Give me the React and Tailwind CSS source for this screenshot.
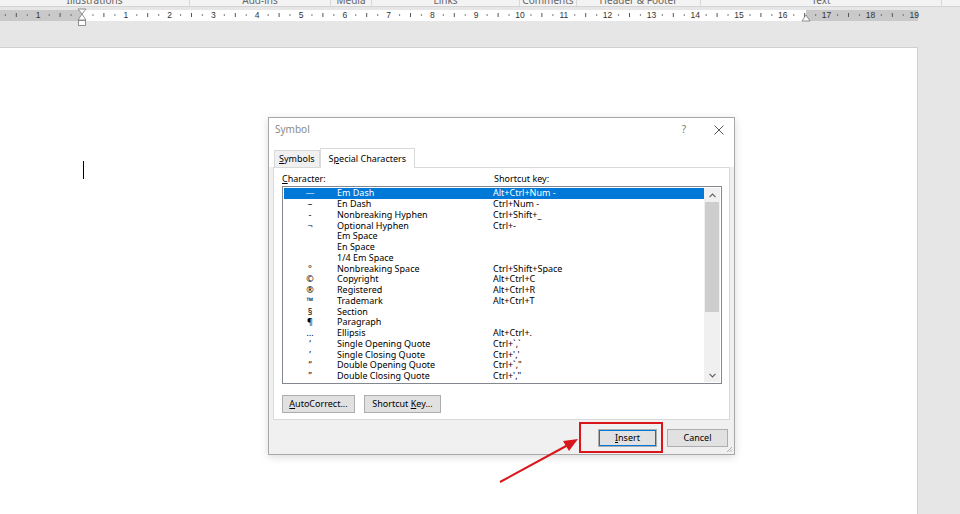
import React from 'react';

const rows = [
  { sym: '—', name: 'Em Dash', key: 'Alt+Ctrl+Num -' },
  { sym: '–', name: 'En Dash', key: 'Ctrl+Num -' },
  { sym: '-', name: 'Nonbreaking Hyphen', key: 'Ctrl+Shift+_' },
  { sym: '¬', name: 'Optional Hyphen', key: 'Ctrl+-' },
  { sym: '', name: 'Em Space', key: '' },
  { sym: '', name: 'En Space', key: '' },
  { sym: '', name: '1/4 Em Space', key: '' },
  { sym: '°', name: 'Nonbreaking Space', key: 'Ctrl+Shift+Space' },
  { sym: '©', name: 'Copyright', key: 'Alt+Ctrl+C' },
  { sym: '®', name: 'Registered', key: 'Alt+Ctrl+R' },
  { sym: '™', name: 'Trademark', key: 'Alt+Ctrl+T' },
  { sym: '§', name: 'Section', key: '' },
  { sym: '¶', name: 'Paragraph', key: '' },
  { sym: '…', name: 'Ellipsis', key: 'Alt+Ctrl+.' },
  { sym: '‘', name: 'Single Opening Quote', key: 'Ctrl+`,`' },
  { sym: '’', name: 'Single Closing Quote', key: "Ctrl+','" },
  { sym: '“', name: 'Double Opening Quote', key: 'Ctrl+`,"' },
  { sym: '”', name: 'Double Closing Quote', key: "Ctrl+',\"" },
];

const groups = [
  { label: 'Illustrations', w: 190 },
  { label: 'Add-ins', w: 141 },
  { label: 'Media', w: 41 },
  { label: 'Links', w: 148 },
  { label: 'Comments', w: 57 },
  { label: 'Header & Footer', w: 124 },
  { label: 'Text', w: 241 },
];

const Ruler = () => {
  const u = 43.8;
  const o = 82;
  const marks = [];
  for (let i = -2; i < 19; i++) {
    const p = o + i * u;
    marks.push(<circle key={`a${i}`} cx={p + u / 4} cy={7} r={0.7} fill="#555" />);
    marks.push(<line key={`b${i}`} x1={p + u / 2} y1={5} x2={p + u / 2} y2={9} stroke="#555" strokeWidth="1" />);
    marks.push(<circle key={`c${i}`} cx={p + (3 * u) / 4} cy={7} r={0.7} fill="#555" />);
    const n = i + 1;
    if (n !== 0) {
      marks.push(
        <text key={`t${i}`} x={p + u} y={10} fontSize="8.5" textAnchor="middle" fill="#333" fontFamily="Liberation Sans, sans-serif">
          {Math.abs(n)}
        </text>
      );
    }
  }
  return (
    <svg width="960" height="20" className="block">
      <rect x="0" y="2" width="82" height="11" fill="#c9c9c9" />
      <rect x="82" y="2" width="724" height="11" fill="#ffffff" />
      <rect x="806" y="2" width="112" height="11" fill="#c9c9c9" />
      {marks}
      <path d="M78 1 L86 1 L82 6 L86 12 L78 12 L82 6 Z" fill="#fff" stroke="#777" strokeWidth="0.8" />
      <rect x="78.5" y="12.5" width="7" height="5" fill="#fff" stroke="#777" strokeWidth="0.8" />
      <path d="M802 13 L810 13 L806 7 Z" fill="#fff" stroke="#777" strokeWidth="0.8" />
    </svg>
  );
};

const Btn = ({ children, className = '' }) => (
  <div className={`flex items-center justify-center h-[18px] bg-[#e1e1e1] border border-[#adadad] text-[9px] text-black ${className}`}>
    {children}
  </div>
);

export default function App() {
  return (
    <div className="relative w-[960px] h-[514px] overflow-hidden bg-[#e6e6e6]" style={{ fontFamily: '"Noto Sans", "Open Sans", sans-serif' }}>
      {/* Ribbon group labels (cut off) */}
      <div className="flex h-[7px] overflow-hidden bg-[#f3f3f3] border-b border-[#d4d4d4]">
        {groups.map((g) => (
          <div key={g.label} className="flex justify-center border-r border-[#d8d8d8] text-[10px] text-[#666] leading-none -mt-[5px]" style={{ width: g.w }}>
            {g.label}
          </div>
        ))}
      </div>

      {/* Ruler */}
      <div className="mt-[1px]">
        <Ruler />
      </div>

      {/* Document */}
      <div className="flex mt-[19px]">
        <div className="w-[918px] h-[470px] bg-white border-t border-r border-[#d0d0d0] relative">
          <div className="ml-[83px] mt-[113px] w-px h-[18px] bg-black" />
        </div>
      </div>

      {/* Symbol dialog */}
      <div className="absolute left-[268px] top-[117px] w-[467px] h-[338px] bg-[#f0f0f0] border border-[#a8a8a8] shadow-[0_2px_8px_rgba(0,0,0,0.15)] flex flex-col">
        <div className="h-[23px] bg-white flex items-center pl-[6px] pr-[10px]">
          <span className="text-[10px] text-[#8a8a8a]">Symbol</span>
          <span className="ml-auto text-[10px] text-[#777] mr-[28px]">?</span>
          <svg width="10" height="10" viewBox="0 0 10 10">
            <path d="M0.5 0.5 L9.5 9.5 M9.5 0.5 L0.5 9.5" stroke="#444" strokeWidth="0.9" />
          </svg>
        </div>

        <div className="flex items-end pl-[5px] h-[26px] bg-white">
          <div className="h-[17px] px-[4px] flex items-center border border-b-0 border-[#d9d9d9] bg-[#f0f0f0] text-[9px]">
            <span><span className="underline">S</span>ymbols</span>
          </div>
          <div className="h-[20px] px-[8px] flex items-center border border-b-0 border-[#d9d9d9] bg-white text-[9px] -mb-px z-10">
            <span>S<span className="underline">p</span>ecial Characters</span>
          </div>
        </div>

        <div className="mx-[4px] h-[253px] bg-white border border-[#d9d9d9] px-[8px] pt-[5px]">
          <div className="flex text-[9px] leading-[12px] h-[13px]">
            <span className="w-[212px]"><span className="underline">C</span>haracter:</span>
            <span>Shortcut key:</span>
          </div>
          <div className="flex w-[440px] h-[198px] border border-[#828790] p-px">
            <div className="flex-1 flex flex-col">
              {rows.map((r, i) => (
                <div key={r.name} className={`flex h-[10.75px] items-center text-[9px] leading-[10px] ${i === 0 ? 'bg-[#0078d7] text-white' : 'text-black'}`}>
                  <span className="w-[52px] text-center">{r.sym}</span>
                  <span className="w-[157px] pl-[1px]">{r.name}</span>
                  <span>{r.key}</span>
                </div>
              ))}
            </div>
            <div className="w-[16px] bg-[#f0f0f0] flex flex-col">
              <div className="h-[14px] flex items-center justify-center">
                <svg width="7" height="5" viewBox="0 0 7 5"><path d="M0.5 4.2 L3.5 1 L6.5 4.2" fill="none" stroke="#606060" strokeWidth="1.1" /></svg>
              </div>
              <div className="mx-[1px] h-[110px] bg-[#cdcdcd]" />
              <div className="flex-1" />
              <div className="h-[14px] flex items-center justify-center">
                <svg width="7" height="5" viewBox="0 0 7 5"><path d="M0.5 0.8 L3.5 4 L6.5 0.8" fill="none" stroke="#606060" strokeWidth="1.1" /></svg>
              </div>
            </div>
          </div>
          <div className="flex gap-[9px] mt-[11px]">
            <Btn className="w-[73px]"><span><span className="underline">A</span>utoCorrect...</span></Btn>
            <Btn className="w-[77px]"><span>Shortcut <span className="underline">K</span>ey...</span></Btn>
          </div>
        </div>

        <div className="flex justify-end gap-[10px] pr-[6px] mt-[9px]">
          <Btn className="w-[59px] border-[#0078d7] shadow-[inset_0_0_0_1px_#0078d7]"><span><span className="underline">I</span>nsert</span></Btn>
          <Btn className="w-[61px]">Cancel</Btn>
        </div>
        <svg className="absolute right-[1px] bottom-[1px]" width="7" height="7" viewBox="0 0 7 7">
          <path d="M6 1 L1 6 M6 3.5 L3.5 6" stroke="#a0a0a0" strokeWidth="0.8" />
        </svg>
      </div>

      {/* Annotation */}
      <div className="absolute left-[579px] top-[422px] w-[84px] h-[31px] border-2 border-[#d9161c]" />
      <svg className="absolute left-0 top-0 pointer-events-none" width="960" height="514">
        <line x1="500" y1="482" x2="568" y2="445" stroke="#d9161c" strokeWidth="2" />
        <path d="M578 439 L563 441 L569 451 Z" fill="#d9161c" />
      </svg>
    </div>
  );
}
